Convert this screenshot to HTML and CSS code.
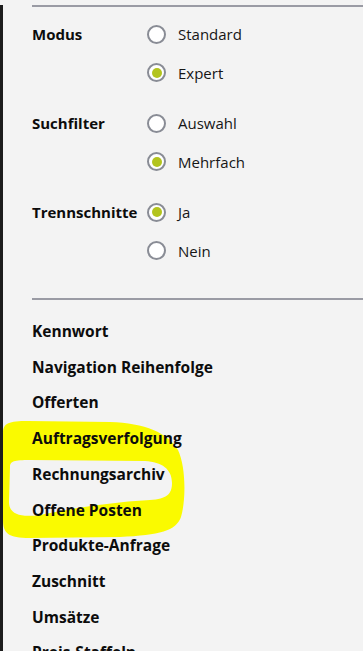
FILE: index.html
```html
<!DOCTYPE html>
<html lang="de">
<head>
<meta charset="utf-8">
<title>Einstellungen</title>
<link rel="stylesheet" href="styles.css">
</head>
<body>
<div class="frame">
  <svg class="marker" width="363" height="651" viewBox="0 0 363 651" aria-hidden="true">
    <path fill-rule="evenodd" fill="#fafa00" d="M3,428 C3,418 9,416 28,416 L110,417 C145,418 168,428 178,445 C186,462 186,495 181,512 C176,526 160,530 120,532 L30,533 C8,533 3,528 3,515 Z M10,462 C10,456 14,455 30,455 L145,456 C162,457 172,464 172,478 C172,489 167,494 150,495 C110,497 70,504 40,510 C18,513 9,508 9,497 Z"/>
  </svg>
  <div class="content">
    <div class="rule"></div>
    <div class="settings">
      <div class="group">
        <div class="label">Modus</div>
        <div class="options">
          <div class="option"><span class="radio"></span><span class="text">Standard</span></div>
          <div class="option"><span class="radio checked"></span><span class="text">Expert</span></div>
        </div>
      </div>
      <div class="group">
        <div class="label">Suchfilter</div>
        <div class="options">
          <div class="option"><span class="radio"></span><span class="text">Auswahl</span></div>
          <div class="option"><span class="radio checked"></span><span class="text">Mehrfach</span></div>
        </div>
      </div>
      <div class="group">
        <div class="label">Trennschnitte</div>
        <div class="options">
          <div class="option"><span class="radio checked"></span><span class="text">Ja</span></div>
          <div class="option"><span class="radio"></span><span class="text">Nein</span></div>
        </div>
      </div>
    </div>
    <div class="rule rule-mid"></div>
    <ul class="menu">
      <li>Kennwort</li>
      <li>Navigation Reihenfolge</li>
      <li>Offerten</li>
      <li>Auftragsverfolgung</li>
      <li>Rechnungsarchiv</li>
      <li>Offene Posten</li>
      <li>Produkte-Anfrage</li>
      <li>Zuschnitt</li>
      <li>Umsätze</li>
      <li>Preis-Staffeln</li>
    </ul>
  </div>
</div>
</body>
</html>
```

FILE: styles.css
```css
html, body {
  margin: 0;
  padding: 0;
  height: 651px;
  overflow: hidden;
  background: #f3f3f3;
}

body {
  font-family: "Open Sans", "Liberation Sans", sans-serif;
  font-size: 15px;
  color: #111;
}

.frame {
  position: relative;
  min-height: 651px;
  border-left: 3px solid #1c1c1c;
}

.marker {
  position: absolute;
  left: -3px;
  top: 0;
  z-index: 0;
  pointer-events: none;
}

.content {
  position: relative;
  z-index: 1;
  padding-left: 29px;
}

.rule {
  height: 2px;
  background: #9a9ba4;
  margin-top: 5px;
}

.rule-mid {
  margin-top: 28px;
}

.settings {
  padding-top: 8px;
  display: flex;
  flex-direction: column;
  gap: 12px;
}

.group {
  display: grid;
  grid-template-columns: 115px 1fr;
}

.label {
  font-weight: 700;
  font-size: 15px;
  line-height: 38.5px;
  color: #0c0c0c;
}

.options {
  display: flex;
  flex-direction: column;
}

.option {
  display: flex;
  align-items: center;
  gap: 12px;
  height: 38.5px;
}

.radio {
  box-sizing: border-box;
  width: 19px;
  height: 19px;
  border: 2px solid #898c95;
  border-radius: 50%;
  background: #ffffff;
  display: flex;
  align-items: center;
  justify-content: center;
}

.radio.checked::after {
  content: "";
  width: 10px;
  height: 10px;
  border-radius: 50%;
  background: #b3c41e;
}

.text {
  color: #161616;
}

.menu {
  list-style: none;
  margin: 0;
  padding: 14px 0 0 0;
}

.menu li {
  font-weight: 700;
  font-size: 15.5px;
  line-height: 35.7px;
  color: #0c0c0c;
}
```
